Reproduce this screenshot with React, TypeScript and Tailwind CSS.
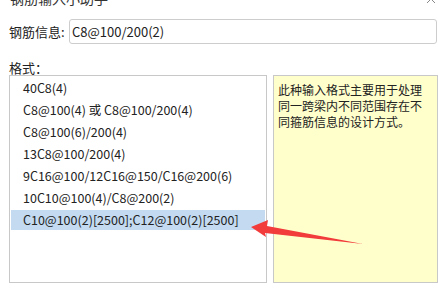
import React from 'react'

const formats = [
  '40C8(4)',
  'C8@100(4) 或 C8@100/200(4)',
  'C8@100(6)/200(4)',
  '13C8@100/200(4)',
  '9C16@100/12C16@150/C16@200(6)',
  '10C10@100(4)/C8@200(2)',
  'C10@100(2)[2500];C12@100(2)[2500]',
]

const font = { fontFamily: '"Microsoft YaHei", "Noto Sans CJK SC", sans-serif' }

export default function App() {
  const selected = formats.length - 1
  return (
    <div className="relative w-[438px] h-[291px] overflow-hidden bg-white text-[#222]" style={font}>
      {/* title bar, mostly scrolled off the top */}
      <div className="h-[20px] -mt-[12px] pl-[10px] text-[14px] leading-[20px] text-[#333]">钢筋输入小助手</div>
      <svg className="absolute right-[2px] -top-[6px]" width="10" height="10" viewBox="0 0 10 10">
        <path d="M1 1 L9 9 M9 1 L1 9" stroke="#888" strokeWidth="1" fill="none" />
      </svg>

      <div className="flex items-center mt-[11px]">
        <span className="w-[69px] pl-[9px] text-[13px]">钢筋信息:</span>
        <div className="w-[368px] h-[25px] border border-[#cdcdcd] rounded-[3px] flex items-center pl-[2px] text-[13px]">
          C8@100/200(2)
        </div>
      </div>

      <div className="pl-[9px] mt-[17px] h-[14px] text-[13px] leading-[14px]">格式：</div>

      <div className="flex gap-[6px] pl-[9px]">
        <div className="w-[258px] h-[208px] border border-[#c8c8c8] pt-[2px] text-[12.5px]">
          {formats.map((f, i) => (
            <div
              key={f}
              className={`h-[20px] mx-[1px] mb-[2px] pl-[12px] flex items-center whitespace-nowrap ${i === selected ? 'bg-[#c3daf1]' : ''}`}
            >
              {f}
            </div>
          ))}
        </div>
        <div className="w-[165px] h-[208px] border border-[#c8c8c8] bg-[#ffffcc] px-[4px] pt-[6px] text-[12px] leading-[16px]">
          此种输入格式主要用于处理同一跨梁内不同范围存在不同箍筋信息的设计方式。
        </div>
      </div>

      {/* annotation arrow */}
      <svg className="absolute left-0 top-0 pointer-events-none" width="438" height="291">
        <polygon points="251,227 268,220 267,226 363,244 265,233 266,237" fill="#f23b3b" />
      </svg>
    </div>
  )
}
